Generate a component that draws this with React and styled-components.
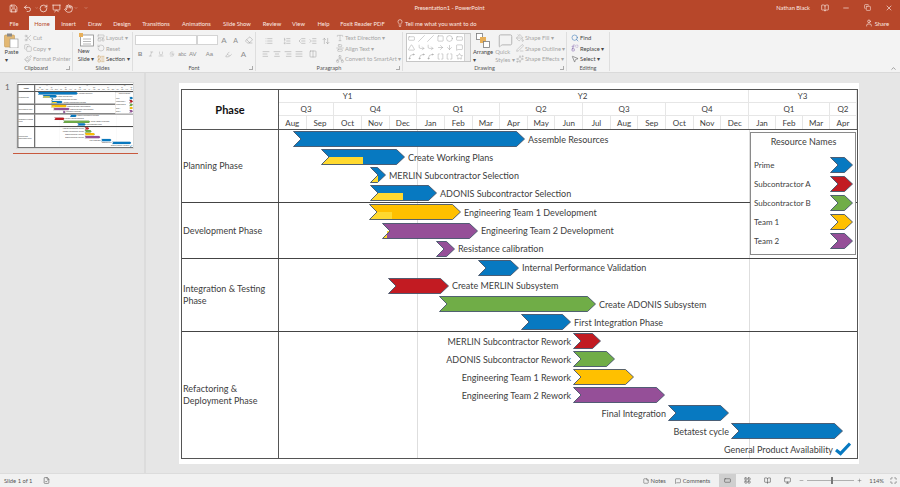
import React from "react";
import styled, { createGlobalStyle } from "styled-components";
import {
  Save, Undo2, RotateCw, Presentation, Hand, ChevronDown, Lightbulb, User, Minus, X, Copy, Scissors,
  Paintbrush, LayoutTemplate, RotateCcw, LayoutList, Italic, Underline, Strikethrough,
  Eraser, List, ListOrdered, Outdent, Indent, AlignLeft, AlignCenter, AlignRight, AlignJustify, Columns2,
  ArrowUpDown, Type, AlignVerticalJustifyCenter, Network, Square, Circle, Triangle, ArrowRight, ArrowDown,
  Star, Slash, CornerDownRight, Spline, Search, Replace, MousePointer2, PaintBucket, PenLine, Sparkles,
  ChevronUp, StickyNote, MessageSquare, LayoutGrid, BookOpen, Monitor, Maximize, Plus, FileCheck, RectangleHorizontal,
  Brackets, Highlighter,
} from "lucide-react";

const COLORS = { blue: "#0779c1", red: "#c21b22", green: "#70ad47", amber: "#ffc000", purple: "#954f98" };
const TIMELINE_LEFT = 279;
const TIMELINE_RIGHT = 857;

const years = [["Y1", 5], ["Y2", 12], ["Y3", 4]];
const quarters = [["Q3", 2], ["Q4", 3], ["Q1", 3], ["Q2", 3], ["Q3", 3], ["Q4", 3], ["Q1", 3], ["Q2", 1]];
const months = ["Aug", "Sep", "Oct", "Nov", "Dec", "Jan", "Feb", "Mar", "Apr", "May", "Jun", "Jul", "Aug", "Sep", "Oct", "Nov", "Dec", "Jan", "Feb", "Mar", "Apr"];

const phases = [
  {
    name: "Planning Phase", height: 73,
    tasks: [
      { from: 293, to: 525, color: "blue", label: "Assemble Resources" },
      { from: 321, to: 405, color: "blue", done: 363, label: "Create Working Plans" },
      { from: 370, to: 386, color: "blue", done: 378, label: "MERLIN Subcontractor Selection" },
      { from: 370, to: 437, color: "blue", done: 403, label: "ADONIS Subcontractor Selection" },
    ],
  },
  {
    name: "Development Phase", height: 55,
    tasks: [
      { from: 369, to: 461, color: "amber", done: 392, doneColor: "#ffd92f", label: "Engineering Team 1 Development" },
      { from: 382, to: 478, color: "purple", done: 387, label: "Engineering Team 2 Development" },
      { from: 436, to: 455, color: "purple", label: "Resistance calibration" },
    ],
  },
  {
    name: "Integration & Testing Phase", height: 73,
    tasks: [
      { from: 478, to: 519, color: "blue", label: "Internal Performance Validation" },
      { from: 388, to: 449, color: "red", label: "Create MERLIN Subsystem" },
      { from: 439, to: 596, color: "green", label: "Create ADONIS Subsystem" },
      { from: 521, to: 571, color: "blue", label: "First Integration Phase" },
    ],
  },
  {
    name: "Refactoring & Deployment Phase", height: 127,
    tasks: [
      { from: 573, to: 601, color: "red", label: "MERLIN Subcontractor Rework", before: true },
      { from: 573, to: 615, color: "green", label: "ADONIS Subcontractor Rework", before: true },
      { from: 573, to: 634, color: "amber", label: "Engineering Team 1 Rework", before: true },
      { from: 573, to: 665, color: "purple", label: "Engineering Team 2 Rework", before: true },
      { from: 668, to: 729, color: "blue", label: "Final Integration", before: true },
      { from: 731, to: 843, color: "blue", label: "Betatest cycle", before: true },
      { to: 851, label: "General Product Availability", before: true, milestone: true },
    ],
  },
];

const resources = [["Prime", "blue"], ["Subcontractor A", "red"], ["Subcontractor B", "green"], ["Team 1", "amber"], ["Team 2", "purple"]];

const tabs = [
  ["File", 14, 8], ["Home", 26], ["Insert", 27], ["Draw", 26], ["Design", 28], ["Transitions", 40], ["Animations", 41],
  ["Slide Show", 40], ["Review", 30], ["View", 23], ["Help", 27], ["Foxit Reader PDF", 51],
];

const GlobalStyle = createGlobalStyle`
  html, body { margin: 0; padding: 0; background: #e6e6e6; }
  body { font-family: Lato, "Liberation Sans", sans-serif; }
  * { box-sizing: border-box; }
`;

const Window = styled.div`
  width: 900px;
  height: 487px;
  display: flex;
  flex-direction: column;
  overflow: hidden;
  background: #e6e6e6;
`;

const TitleBar = styled.div`
  height: 15px;
  background: #b7472a;
  color: #fbe9e3;
  display: grid;
  grid-template-columns: 1fr auto 1fr;
  align-items: center;
  font-size: 5.8px;
`;
const QuickAccess = styled.div`
  display: flex;
  align-items: center;
  padding-left: 6.5px;
  padding-top: 1px;
`;
const Slot = styled.span`
  width: ${(p) => p.$width}px;
  flex: none;
  display: flex;
  align-items: center;
  justify-content: center;
`;
const WindowTitle = styled.div`
  text-align: center;
  margin-right: 1px;
`;
const WindowControls = styled.div`
  display: flex;
  justify-content: flex-end;
  align-items: center;
`;
const UserName = styled.span`
  margin-right: 4px;
`;

const TabBar = styled.div`
  height: 15px;
  background: #b7472a;
  color: #fbe9e3;
  display: flex;
  align-items: flex-end;
  font-size: 5.8px;
  padding-left: 7px;
`;
const Tab = styled.div`
  width: ${(p) => p.$width}px;
  height: 14px;
  flex: none;
  display: flex;
  align-items: center;
  justify-content: center;
  white-space: nowrap;
  background: ${(p) => (p.$active ? "#f3f3f3" : "transparent")};
  color: ${(p) => (p.$active ? "#b7472a" : "inherit")};
  margin-right: ${(p) => p.$gap || 0}px;
`;
const TellMe = styled.div`
  display: flex;
  align-items: center;
  gap: 1px;
  height: 14px;
  margin-left: 8px;
`;
const ShareButton = styled.div`
  display: flex;
  align-items: center;
  gap: 2px;
  height: 14px;
  margin-left: auto;
  padding-right: 11px;
`;

const Ribbon = styled.div`
  height: 43px;
  background: #f3f3f3;
  border-bottom: 1px solid #dadada;
  display: flex;
  position: relative;
  flex: none;
`;
const Group = styled.div`
  width: ${(p) => p.$width}px;
  flex: none;
  margin: 2px 0 1px;
  border-right: 1px solid #dedede;
  display: flex;
  flex-direction: column;
  position: relative;
`;
const GroupBody = styled.div`
  flex: 1;
  min-height: 0;
  display: flex;
  gap: ${(p) => p.$gap ?? 2}px;
  padding: 1px 0 0 ${(p) => p.$pad ?? 3}px;
`;
const GroupLabel = styled.div`
  height: 8px;
  line-height: 9px;
  text-align: center;
  font-size: 5.6px;
  color: #555;
`;
const Launcher = styled.div`
  position: absolute;
  right: 2px;
  bottom: 1px;
  width: 4px;
  height: 4px;
  border-right: 1px solid #aaa;
  border-bottom: 1px solid #aaa;
`;
const BigButton = styled.div`
  width: ${(p) => p.$width}px;
  flex: none;
  display: flex;
  flex-direction: column;
  align-items: center;
  font-size: 5.8px;
  line-height: 8px;
  white-space: nowrap;
  color: ${(p) => (p.$dim ? "#a6a6a6" : "#444")};
`;
const BigIcon = styled.div`
  height: 16px;
  display: flex;
  align-items: flex-start;
`;
const Stack = styled.div`
  display: flex;
  flex-direction: column;
  justify-content: space-between;
  height: 30px;
  padding: ${(p) => p.$pad || "0"};
  width: ${(p) => (p.$width ? `${p.$width}px` : "auto")};
  flex: none;
`;
const SmallAction = styled.div`
  display: flex;
  align-items: center;
  gap: 1px;
  height: 9px;
  white-space: nowrap;
  font-size: 5.8px;
  color: ${(p) => (p.$dim ? "#a6a6a6" : "#444")};
`;
const ToolRow = styled.div`
  display: flex;
  align-items: center;
  height: 12px;
  color: #9a9a9a;
`;
const ComboBox = styled.div`
  width: ${(p) => p.$width}px;
  height: 10px;
  flex: none;
  background: #fff;
  border: 1px solid #d4d4d4;
`;
const Glyph = styled.span`
  font-family: "Liberation Sans", sans-serif;
  font-size: ${(p) => p.$size || 6}px;
  font-weight: ${(p) => (p.$bold ? 700 : 400)};
  color: #8c8c8c;
`;
const Gallery = styled.div`
  width: 65px;
  height: 29px;
  flex: none;
  display: flex;
  background: #fff;
  border: 1px solid #c6c6c6;
`;
const GalleryShapes = styled.div`
  flex: 1;
  display: grid;
  grid-template-columns: repeat(6, 1fr);
  align-items: center;
  justify-items: center;
  color: #8c8c8c;
`;
const GalleryScroll = styled.div`
  width: 6px;
  background: #ededed;
  border-left: 1px solid #d4d4d4;
`;
const Collapse = styled.div`
  position: absolute;
  right: 3px;
  bottom: 0;
  color: #666;
  line-height: 0;
`;

const Workspace = styled.div`
  flex: 1;
  min-height: 0;
  display: flex;
`;
const ThumbPane = styled.div`
  width: 146px;
  flex: none;
  border-right: 2px solid #dcdcdc;
  padding: 9px 0 0 5px;
`;
const ThumbRow = styled.div`
  display: flex;
  gap: 6px;
  font-size: 8px;
  color: #666;
  line-height: 10px;
`;
const ThumbFrame = styled.div`
  width: 118px;
  height: 67px;
  background: #fff;
  border: 1px solid #d8d8d8;
  overflow: hidden;
  --rule: 6px;
`;
const ThumbScale = styled.div`
  width: 680px;
  transform: scale(0.1735);
  transform-origin: 0 0;
`;
const ThumbRule = styled.div`
  width: 125px;
  height: 1px;
  margin: 4px 0 0 8px;
  background: #c8593e;
`;
const Stage = styled.div`
  flex: 1;
  padding: 10px 0 0 33px;
`;

const Slide = styled.div`
  width: 680px;
  height: 381px;
  background: #fff;
  padding: 6px 1px 5px 2px;
`;
const Table = styled.div`
  height: 100%;
  border: var(--rule, 1px) solid #555;
  display: flex;
  flex-direction: column;
  font-family: Lato, "Liberation Sans", sans-serif;
  color: #404040;
`;
const HeaderBlock = styled.div`
  height: 40px;
  flex: none;
  display: flex;
  border-bottom: var(--rule, 1px) solid #555;
`;
const PhaseHead = styled.div`
  width: 97px;
  flex: none;
  display: flex;
  align-items: center;
  justify-content: center;
  font-size: 11px;
  font-weight: 700;
  color: #111;
  border-right: var(--rule, 1px) solid #555;
`;
const HeaderScale = styled.div`
  flex: 1;
  display: grid;
  grid-template-columns: repeat(17, 27.65fr) repeat(4, 27fr);
  grid-template-rows: repeat(3, 1fr);
`;
const ScaleCell = styled.div`
  grid-column: span ${(p) => p.$span};
  display: flex;
  align-items: center;
  justify-content: center;
  font-size: 8px;
  border-right: 1px solid #e6e6e6;
  border-bottom: 1px solid #e6e6e6;
  &:nth-child(n + 12) { border-bottom: 0; }
`;
const Body = styled.div`
  flex: 1;
  min-height: 0;
  position: relative;
  display: flex;
  flex-direction: column;
`;
const PhaseRow = styled.div`
  flex: ${(p) => p.$height} 1 0;
  min-height: 0;
  display: flex;
  border-top: ${(p) => (p.$first ? "0" : "var(--rule, 1px) solid #444")};
`;
const PhaseName = styled.div`
  width: 97px;
  flex: none;
  display: flex;
  align-items: center;
  padding: 0 2px 0 1px;
  font-size: 9px;
  line-height: 12px;
  border-right: var(--rule, 1px) solid #555;
`;
const TaskList = styled.div`
  flex: 1;
  display: flex;
  flex-direction: column;
  position: relative;
`;
const TaskRow = styled.div`
  flex: 1;
  min-height: 0;
  display: flex;
  align-items: center;
  gap: ${(p) => (p.$before ? 2 : 3)}px;
  white-space: nowrap;
  font-size: 9px;
  position: relative;
  justify-content: ${(p) => (p.$before ? "flex-end" : "flex-start")};
  padding-left: ${(p) => p.$left}px;
  padding-right: ${(p) => p.$right}px;
`;
const YearLine = styled.div`
  position: absolute;
  top: 0;
  bottom: 0;
  left: ${(p) => p.$left}px;
  width: 1px;
  background: #dedede;
`;
const ChevronSvg = styled.svg`
  flex: none;
  display: block;
`;
const LegendBox = styled.div`
  position: absolute;
  top: 2px;
  right: 1px;
  width: 106px;
  height: 123px;
  background: #fff;
  border: 1px solid #8a8a8a;
  padding: 0 2px 0 3px;
  display: flex;
  flex-direction: column;
`;
const LegendTitle = styled.div`
  height: 23px;
  padding-top: 3px;
  text-align: center;
  font-size: 9px;
`;
const LegendRow = styled.div`
  height: 18.8px;
  flex: none;
  display: flex;
  align-items: center;
  justify-content: space-between;
  font-size: 8px;
`;

const StatusBar = styled.div`
  height: 14px;
  flex: none;
  background: #f1f1f1;
  border-top: 1px solid #dcdcdc;
  display: flex;
  align-items: center;
  font-size: 5.8px;
  color: #555;
  padding-left: 4px;
  white-space: nowrap;
`;
const StatusItem = styled.div`
  display: flex;
  align-items: center;
  gap: 2px;
  margin-left: ${(p) => (p.$auto ? "auto" : `${p.$gap || 0}px`)};
`;
const ViewButton = styled.div`
  width: 17px;
  height: 13px;
  display: flex;
  align-items: center;
  justify-content: center;
  margin-right: 1px;
  background: ${(p) => (p.$active ? "#cfcfcf" : "transparent")};
`;
const ZoomTrack = styled.div`
  width: 47px;
  height: 1px;
  background: #b0b0b0;
  margin: 0 1px;
  position: relative;
`;
const ZoomThumb = styled.div`
  position: absolute;
  left: 24px;
  top: -3px;
  width: 2px;
  height: 7px;
  background: #777;
`;

// bar with a notch on the left and a point on the right
const Chevron = ({ width, height = 16, color, done, doneColor = "#ffd92f", stroke = "#44546a" }) => {
  const tip = Math.min(8, width / 2);
  const w = width - 0.5;
  const h = height - 0.5;
  const mid = height / 2;
  const shape = `0.5,0.5 ${w - tip},0.5 ${w},${mid} ${w - tip},${h} 0.5,${h} ${tip},${mid}`;
  return (
    <ChevronSvg width={width} height={height} viewBox={`0 0 ${width} ${height}`}>
      <polygon points={shape} fill={COLORS[color]} />
      {done && (
        <polygon points={`${tip},${mid} ${done},${mid} ${done},${h} 0.5,${h}`} fill={doneColor} />
      )}
      <polygon points={shape} fill="none" stroke={stroke} strokeWidth="0.9" />
    </ChevronSvg>
  );
};

const CheckMark = () => (
  <ChevronSvg width={16} height={14} viewBox="0 0 16 14">
    <polyline points="1,8 5.5,11.5 15,1.5" fill="none" stroke="#0779c1" strokeWidth="3.2" />
  </ChevronSvg>
);

const Task = ({ task }) => {
  const left = task.before ? 0 : task.from - TIMELINE_LEFT;
  const right = task.before ? TIMELINE_RIGHT - task.to : 0;
  const bar = task.milestone ? (
    <CheckMark />
  ) : (
    <Chevron
      width={task.to - task.from}
      color={task.color}
      done={task.done && task.done - task.from}
      doneColor={task.doneColor}
    />
  );
  return (
    <TaskRow $before={task.before} $left={left} $right={right}>
      {task.before && <span>{task.label}</span>}
      {bar}
      {!task.before && <span>{task.label}</span>}
    </TaskRow>
  );
};

const GanttSlide = () => (
  <Slide>
    <Table>
      <HeaderBlock>
        <PhaseHead>Phase</PhaseHead>
        <HeaderScale>
          {years.map(([label, span], i) => <ScaleCell key={i} $span={span}>{label}</ScaleCell>)}
          {quarters.map(([label, span], i) => <ScaleCell key={i} $span={span}>{label}</ScaleCell>)}
          {months.map((label, i) => <ScaleCell key={i} $span={1}>{label}</ScaleCell>)}
        </HeaderScale>
      </HeaderBlock>
      <Body>
        {phases.map((phase, i) => (
          <PhaseRow key={phase.name} $height={phase.height} $first={i === 0}>
            <PhaseName>{phase.name}</PhaseName>
            <TaskList>
              <YearLine $left={138} />
              <YearLine $left={470} />
              {phase.tasks.map((task) => <Task key={task.label} task={task} />)}
            </TaskList>
          </PhaseRow>
        ))}
        <LegendBox>
          <LegendTitle>Resource Names</LegendTitle>
          {resources.map(([name, color]) => (
            <LegendRow key={name}>
              {name}
              <Chevron width={23} color={color} />
            </LegendRow>
          ))}
        </LegendBox>
      </Body>
    </Table>
  </Slide>
);

const Ic = ({ as: Icon, size = 8, color, sw = 1.5 }) => <Icon size={size} color={color} strokeWidth={sw} />;

const PasteIcon = () => (
  <svg width="15" height="15" viewBox="0 0 15 15">
    <rect x="0.5" y="2" width="10" height="12" rx="1" fill="#e3b873" stroke="#c49a55" strokeWidth="0.6" />
    <rect x="3" y="0.5" width="5" height="3" fill="#8a8a8a" />
    <rect x="6" y="6" width="8" height="9" fill="#fff" stroke="#9a9a9a" strokeWidth="0.7" />
  </svg>
);

const NewSlideIcon = () => (
  <svg width="15" height="14" viewBox="0 0 15 14">
    <rect x="1.5" y="2" width="13" height="11" fill="#fff" stroke="#8a8a8a" strokeWidth="0.8" />
    <path d="M4 6h8M4 8.5h8M4 11h8" stroke="#9a9a9a" strokeWidth="0.7" />
    <rect x="0" y="0" width="4" height="4" fill="#e8b05a" />
  </svg>
);

const ArrangeIcon = () => (
  <svg width="14" height="15" viewBox="0 0 14 15">
    <rect x="0.5" y="0.5" width="6" height="6" fill="#fff" stroke="#7a7a7a" strokeWidth="0.8" />
    <rect x="4" y="4" width="6" height="6" fill="#e8b05a" />
    <rect x="7.5" y="8.5" width="6" height="6" fill="#fff" stroke="#7a7a7a" strokeWidth="0.8" />
  </svg>
);

const shapes = [
  RectangleHorizontal, Slash, Slash, Square, Circle, RectangleHorizontal,
  Triangle, CornerDownRight, CornerDownRight, ArrowRight, ArrowDown, MessageSquare,
  Spline, Spline, Spline, Brackets, Brackets, Star,
];

const RibbonBar = () => (
  <Ribbon>
    <Group $width={73}>
      <GroupBody $pad={4} $gap={5}>
        <BigButton $width={15}>
          <BigIcon><PasteIcon /></BigIcon>
          Paste
          <br />
          ▾
        </BigButton>
        <Stack>
          <SmallAction $dim><Ic as={Scissors} />Cut</SmallAction>
          <SmallAction $dim><Ic as={Copy} />Copy ▾</SmallAction>
          <SmallAction $dim><Ic as={Paintbrush} />Format Painter</SmallAction>
        </Stack>
      </GroupBody>
      <GroupLabel>Clipboard</GroupLabel>
      <Launcher />
    </Group>
    <Group $width={60}>
      <GroupBody $pad={4}>
        <BigButton $width={18}>
          <BigIcon><NewSlideIcon /></BigIcon>
          New
          <br />
          Slide ▾
        </BigButton>
        <Stack>
          <SmallAction $dim><Ic as={LayoutTemplate} />Layout ▾</SmallAction>
          <SmallAction $dim><Ic as={RotateCcw} />Reset</SmallAction>
          <SmallAction><Ic as={LayoutList} color="#c9964a" />Section ▾</SmallAction>
        </Stack>
      </GroupBody>
      <GroupLabel>Slides</GroupLabel>
    </Group>
    <Group $width={123}>
      <GroupBody $pad={2}>
        <Stack $pad="1px 0 3px">
          <ToolRow>
            <ComboBox $width={62} />
            <ComboBox $width={21} />
            <Slot $width={12}><Glyph $size={8}>A</Glyph></Slot>
            <Slot $width={11}><Glyph $size={7}>A</Glyph></Slot>
            <Slot $width={15}><Ic as={Eraser} size={8} /></Slot>
          </ToolRow>
          <ToolRow>
            <Slot $width={10.5}><Glyph $bold>B</Glyph></Slot>
            <Slot $width={10.5}><Ic as={Italic} size={6} /></Slot>
            <Slot $width={10.5}><Ic as={Underline} size={6} /></Slot>
            <Slot $width={10.5}><Ic as={Strikethrough} size={6} /></Slot>
            <Slot $width={10.5}><Glyph $size={5}>abc</Glyph></Slot>
            <Slot $width={10.5}><Glyph>AV</Glyph></Slot>
            <Slot $width={23}><Glyph>Aa</Glyph></Slot>
            <Slot $width={15}><Ic as={Highlighter} size={7} /></Slot>
            <Slot $width={15}><Glyph $size={8}>A</Glyph></Slot>
          </ToolRow>
        </Stack>
      </GroupBody>
      <GroupLabel>Font</GroupLabel>
      <Launcher />
    </Group>
    <Group $width={147}>
      <GroupBody $pad={4} $gap={0}>
        <Stack $width={76} $pad="2px 0 3px">
          <ToolRow>
            <Slot $width={18}><Ic as={List} /></Slot>
            <Slot $width={18}><Ic as={ListOrdered} /></Slot>
            <Slot $width={11}><Ic as={Outdent} /></Slot>
            <Slot $width={11}><Ic as={Indent} /></Slot>
            <Slot $width={16}><Ic as={ArrowUpDown} /></Slot>
          </ToolRow>
          <ToolRow>
            <Slot $width={11}><Ic as={AlignLeft} /></Slot>
            <Slot $width={11}><Ic as={AlignCenter} /></Slot>
            <Slot $width={11}><Ic as={AlignRight} /></Slot>
            <Slot $width={11}><Ic as={AlignJustify} /></Slot>
            <Slot $width={18}><Ic as={Columns2} /></Slot>
          </ToolRow>
        </Stack>
        <Stack>
          <SmallAction $dim><Ic as={Type} />Text Direction ▾</SmallAction>
          <SmallAction $dim><Ic as={AlignVerticalJustifyCenter} />Align Text ▾</SmallAction>
          <SmallAction $dim><Ic as={Network} />Convert to SmartArt ▾</SmallAction>
        </Stack>
      </GroupBody>
      <GroupLabel>Paragraph</GroupLabel>
      <Launcher />
    </Group>
    <Group $width={164}>
      <GroupBody $pad={3} $gap={1}>
        <Gallery>
          <GalleryShapes>
            {shapes.map((Shape, i) => <Shape key={i} size={7} strokeWidth={1.4} />)}
          </GalleryShapes>
          <GalleryScroll />
        </Gallery>
        <BigButton $width={22}>
          <BigIcon><ArrangeIcon /></BigIcon>
          Arrange
          <br />
          ▾
        </BigButton>
        <BigButton $width={20} $dim>
          <BigIcon><Ic as={MessageSquare} size={15} color="#b0b0b0" /></BigIcon>
          Quick
          <br />
          Styles ▾
        </BigButton>
        <Stack>
          <SmallAction $dim><Ic as={PaintBucket} />Shape Fill ▾</SmallAction>
          <SmallAction $dim><Ic as={PenLine} />Shape Outline ▾</SmallAction>
          <SmallAction $dim><Ic as={Sparkles} />Shape Effects ▾</SmallAction>
        </Stack>
      </GroupBody>
      <GroupLabel>Drawing</GroupLabel>
      <Launcher />
    </Group>
    <Group $width={43}>
      <GroupBody $pad={4}>
        <Stack>
          <SmallAction><Ic as={Search} color="#2b6cb0" />Find</SmallAction>
          <SmallAction><Ic as={Replace} color="#7a5aa8" />Replace ▾</SmallAction>
          <SmallAction><Ic as={MousePointer2} />Select ▾</SmallAction>
        </Stack>
      </GroupBody>
      <GroupLabel>Editing</GroupLabel>
    </Group>
    <Collapse><ChevronUp size={7} /></Collapse>
  </Ribbon>
);

export default function App() {
  return (
    <Window>
      <GlobalStyle />
      <TitleBar>
        <QuickAccess>
          <Slot $width={14}><Save size={9} /></Slot>
          <Slot $width={14}><Undo2 size={9} /></Slot>
          <Slot $width={3.5}><ChevronDown size={4} /></Slot>
          <Slot $width={10}><RotateCw size={9} /></Slot>
          <Slot $width={16}><Presentation size={9} /></Slot>
          <Slot $width={9}><Hand size={9} /></Slot>
          <Slot $width={6}><ChevronDown size={4} /></Slot>
          <Slot $width={14}><ChevronDown size={4} /></Slot>
        </QuickAccess>
        <WindowTitle>Presentation1 - PowerPoint</WindowTitle>
        <WindowControls>
          <UserName>Nathan Black</UserName>
          <Slot $width={21.5}><BookOpen size={8} /></Slot>
          <Slot $width={21.5}><Minus size={8} /></Slot>
          <Slot $width={21.5}><Copy size={7} /></Slot>
          <Slot $width={21.5}><X size={8} /></Slot>
        </WindowControls>
      </TitleBar>
      <TabBar>
        {tabs.map(([label, width, gap]) => (
          <Tab key={label} $width={width} $gap={gap} $active={label === "Home"}>{label}</Tab>
        ))}
        <TellMe>
          <Lightbulb size={8} />
          Tell me what you want to do
        </TellMe>
        <ShareButton>
          <User size={8} />
          Share
        </ShareButton>
      </TabBar>
      <RibbonBar />
      <Workspace>
        <ThumbPane>
          <ThumbRow>
            1
            <ThumbFrame>
              <ThumbScale>
                <GanttSlide />
              </ThumbScale>
            </ThumbFrame>
          </ThumbRow>
          <ThumbRule />
        </ThumbPane>
        <Stage>
          <GanttSlide />
        </Stage>
      </Workspace>
      <StatusBar>
        <StatusItem>Slide 1 of 1</StatusItem>
        <StatusItem $gap={10}><FileCheck size={7} /></StatusItem>
        <StatusItem $auto><StickyNote size={6} />Notes</StatusItem>
        <StatusItem $gap={9}><MessageSquare size={6} />Comments</StatusItem>
        <StatusItem $gap={9}>
          <ViewButton $active><RectangleHorizontal size={7} /></ViewButton>
          <ViewButton><LayoutGrid size={7} /></ViewButton>
          <ViewButton><BookOpen size={7} /></ViewButton>
          <ViewButton><Monitor size={7} /></ViewButton>
        </StatusItem>
        <StatusItem $gap={2}>
          <Minus size={5} />
          <ZoomTrack><ZoomThumb /></ZoomTrack>
          <Plus size={5} />
        </StatusItem>
        <StatusItem $gap={7}>114%</StatusItem>
        <StatusItem $gap={6}><Maximize size={7} /></StatusItem>
        <Slot $width={3} />
      </StatusBar>
    </Window>
  );
}
